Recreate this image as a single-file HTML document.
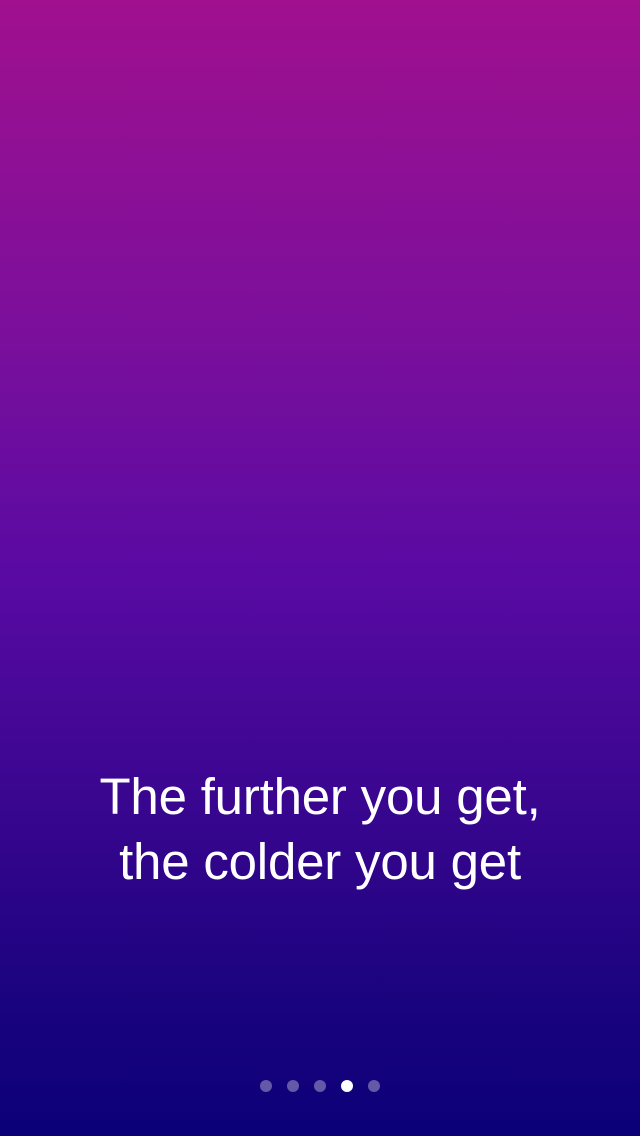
<!DOCTYPE html>
<html><head><style>
html,body{margin:0;padding:0}
body{width:640px;height:1136px;overflow:hidden;position:relative;
background:linear-gradient(180deg,#a0108f 0%,#7a0f9c 30%,#5a0aa3 50%,#3a0690 70%,#1a037e 88%,#0b0078 100%);
font-family:"Liberation Sans",sans-serif;}
.t{position:absolute;left:0;width:640px;top:764px;text-align:center;color:#fff;font-size:51px;line-height:65px;letter-spacing:-0.2px;}
.d{position:absolute;top:1080px;width:12px;height:12px;border-radius:50%;background:rgba(255,255,255,0.35)}
</style></head><body>
<div class="t">The further you get,<br>the colder you get</div>
<div class="d" style="left:260px"></div>
<div class="d" style="left:287px"></div>
<div class="d" style="left:314px"></div>
<div class="d" style="left:341px;background:#fff"></div>
<div class="d" style="left:368px"></div>
</body></html>
